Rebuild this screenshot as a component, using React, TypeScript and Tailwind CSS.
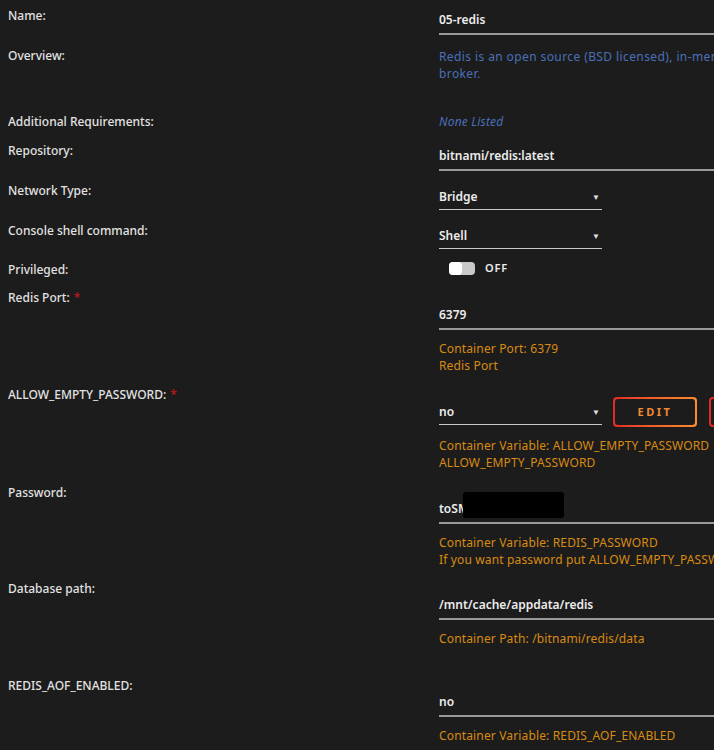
import React from "react";

function Label(props: { text: string; required?: boolean; pad: string }) {
  return (
    <div className={`w-[439px] shrink-0 pl-2 text-[12px] font-medium leading-[17px] text-[#e2e2e2] ${props.pad}`}>
      {props.text}
      {props.required && <span className="ml-1 text-[#c01818]">*</span>}
    </div>
  );
}

function Helper(props: { lines: string[] }) {
  return (
    <div className="mt-[10px] whitespace-nowrap text-[12px] leading-[17px] tracking-[0.15px] text-[#d88b12]">
      {props.lines.map((l, i) => (
        <div key={i}>{l}</div>
      ))}
    </div>
  );
}

function Select(props: { value: string; pad: string }) {
  return (
    <div
      className={`flex w-[163px] self-start items-center justify-between border-b border-[#c8c8c8] pb-[4px] pr-[2px] text-[12px] font-semibold leading-[17px] text-[#ececec] ${props.pad}`}
    >
      <span>{props.value}</span>
      <span className="text-[8px] text-[#e0e0e0]">▼</span>
    </div>
  );
}

function TextInput(props: { value: string; pad: string; children?: React.ReactNode }) {
  return (
    <div
      className={`relative border-b-2 border-[#9a9a9a] pb-[5px] text-[12px] font-semibold leading-[17px] text-[#ececec] ${props.pad}`}
    >
      {props.value}
      {props.children}
    </div>
  );
}

export default function App() {
  return (
    <div
      className="w-full h-[750px] overflow-hidden bg-[#1c1c1c]"
      style={{ fontFamily: "'Noto Sans', 'Open Sans', sans-serif" }}
    >
      <div className="w-[1200px]">
        {/* Name */}
        <div className="flex h-[42px]">
          <Label text="Name:" pad="pt-[7px]" />
          <div className="w-[700px]">
            <TextInput value="05-redis" pad="pt-[11px]" />
          </div>
        </div>

        {/* Overview */}
        <div className="flex h-[62px]">
          <Label text="Overview:" pad="pt-[5px]" />
          <div className="w-[700px] whitespace-nowrap pt-[6px] text-[12px] leading-[17px] tracking-[0.4px] text-[#4a6fba]">
            <div>
              Redis is an open source (BSD licensed), in-memory data structure store, used as a database, cache and message
            </div>
            <div>broker.</div>
          </div>
        </div>

        {/* Additional Requirements */}
        <div className="flex h-[34px]">
          <Label text="Additional Requirements:" pad="pt-[9px]" />
          <div className="pt-[9px] text-[12px] italic leading-[17px] tracking-[0.2px] text-[#4a6fba]">None Listed</div>
        </div>

        {/* Repository */}
        <div className="flex h-[40px]">
          <Label text="Repository:" pad="pt-[4px]" />
          <div className="w-[700px]">
            <TextInput value="bitnami/redis:latest" pad="pt-[9px]" />
          </div>
        </div>

        {/* Network Type */}
        <div className="flex h-[40px]">
          <Label text="Network Type:" pad="pt-[4px]" />
          <Select value="Bridge" pad="pt-[10px]" />
        </div>

        {/* Console shell command */}
        <div className="flex h-[40px]">
          <Label text="Console shell command:" pad="pt-[4px]" />
          <Select value="Shell" pad="pt-[9px]" />
        </div>

        {/* Privileged */}
        <div className="flex h-[28px]">
          <Label text="Privileged:" pad="pt-[3px]" />
          <div className="flex h-[17px] items-center gap-[10px] pl-[10px] pt-[4px]">
            <div className="flex h-[13px] w-[26px] items-center rounded-[4px] bg-[#c9c9c9]">
              <div className="h-[13px] w-[13px] rounded-[4px] bg-white" />
            </div>
            <span className="text-[11px] font-semibold tracking-[0.8px] text-[#ececec]">OFF</span>
          </div>
        </div>

        {/* Redis Port */}
        <div className="flex h-[97px]">
          <Label text="Redis Port:" required pad="pt-[3px]" />
          <div className="w-[700px]">
            <TextInput value="6379" pad="pt-[20px]" />
            <Helper lines={["Container Port: 6379", "Redis Port"]} />
          </div>
        </div>

        {/* ALLOW_EMPTY_PASSWORD */}
        <div className="flex h-[97px]">
          <Label text="ALLOW_EMPTY_PASSWORD:" required pad="pt-[3px]" />
          <div className="w-[700px]">
            <div className="flex items-start">
              <Select value="no" pad="pt-[20px]" />
              <div className="ml-[11px] mt-[14px] rounded-[4px] bg-gradient-to-r from-[#e22828] to-[#ff8c2f] p-[2px]">
                <div className="flex h-[26px] w-[80px] items-center justify-center rounded-[3px] bg-[#1c1c1c] text-[11px] font-bold tracking-[2.5px] text-[#f08a30]">
                  EDIT
                </div>
              </div>
              <div className="ml-[12px] mt-[14px] h-[30px] w-[90px] rounded-[4px] border-2 border-[#e22828]" />
            </div>
            <Helper lines={["Container Variable: ALLOW_EMPTY_PASSWORD", "ALLOW_EMPTY_PASSWORD"]} />
          </div>
        </div>

        {/* Password */}
        <div className="flex h-[96px]">
          <Label text="Password:" pad="pt-[4px]" />
          <div className="w-[700px]">
            <TextInput value="toSM" pad="pt-[20px]">
              <div className="absolute left-[24px] top-[12px] h-[26px] w-[101px] rounded-[3px] bg-black" />
            </TextInput>
            <Helper
              lines={[
                "Container Variable: REDIS_PASSWORD",
                "If you want password put ALLOW_EMPTY_PASSWORD to no",
              ]}
            />
          </div>
        </div>

        {/* Database path */}
        <div className="flex h-[96px]">
          <Label text="Database path:" pad="pt-[4px]" />
          <div className="w-[700px]">
            <TextInput value="/mnt/cache/appdata/redis" pad="pt-[20px]" />
            <Helper lines={["Container Path: /bitnami/redis/data"]} />
          </div>
        </div>

        {/* REDIS_AOF_ENABLED */}
        <div className="flex h-[90px]">
          <Label text="REDIS_AOF_ENABLED:" pad="pt-[5px]" />
          <div className="w-[700px]">
            <TextInput value="no" pad="pt-[21px]" />
            <Helper lines={["Container Variable: REDIS_AOF_ENABLED"]} />
          </div>
        </div>
      </div>
    </div>
  );
}
